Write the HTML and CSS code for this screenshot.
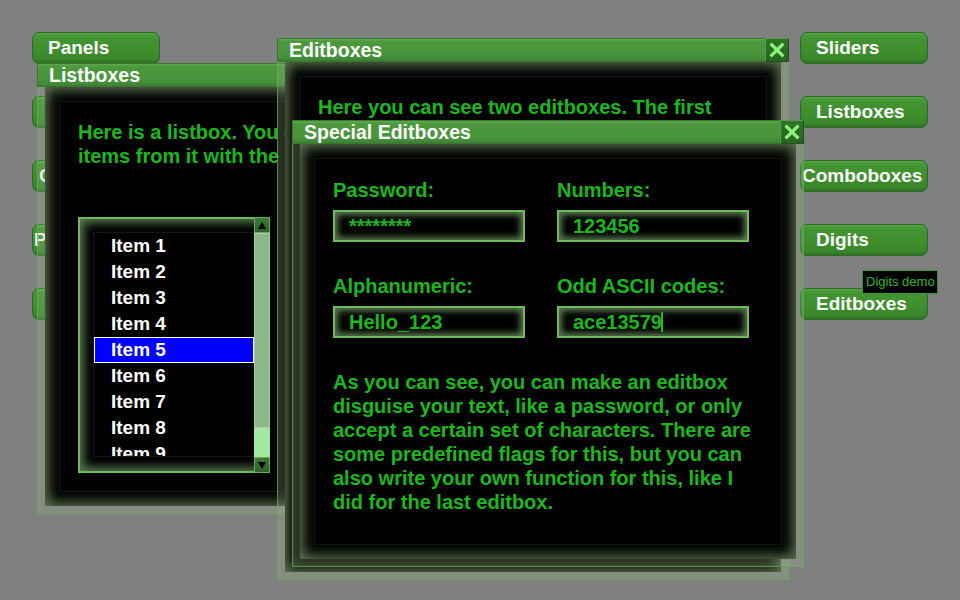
FILE: index.html
```html
<!DOCTYPE html>
<html lang="en">
<head>
<meta charset="utf-8">
<title>Widget demo</title>
<link rel="stylesheet" href="styles.css">
</head>
<body>
<div class="desktop">
  <nav class="btn-col">
    <div class="btn">Panels</div>
    <div class="btn">Buttons</div>
    <div class="btn btn-mid">Checkboxes</div>
    <div class="btn btn-wide">Progressbars</div>
    <div class="btn">Labels</div>
  </nav>
  <nav class="btn-col">
    <div class="btn">Sliders</div>
    <div class="btn">Listboxes</div>
    <div class="btn btn-wide">Comboboxes</div>
    <div class="btn">Digits</div>
    <div class="btn">Editboxes</div>
  </nav>

  <section class="window win-list">
    <header class="titlebar"><span class="title">Listboxes</span></header>
    <div class="frame">
      <div class="panel">
        <p class="text">Here is a listbox. You can select<br>items from it with the mouse.</p>
        <div class="listbox">
          <ul class="list">
            <li class="item">Item 1</li>
            <li class="item">Item 2</li>
            <li class="item">Item 3</li>
            <li class="item">Item 4</li>
            <li class="item selected">Item 5</li>
            <li class="item">Item 6</li>
            <li class="item">Item 7</li>
            <li class="item">Item 8</li>
            <li class="item">Item 9</li>
            <li class="item">Item 10</li>
          </ul>
          <div class="scrollbar">
            <div class="sb-arrow"><span class="tri-up"></span></div>
            <div class="sb-track"><div class="sb-thumb"></div></div>
            <div class="sb-arrow"><span class="tri-down"></span></div>
          </div>
        </div>
      </div>
    </div>
  </section>

  <section class="window win-edit">
    <header class="titlebar">
      <span class="title">Editboxes</span>
      <span class="close"><svg viewBox="0 0 24 24" width="24" height="24"><path d="M5 5 L19 19 M19 5 L5 19" stroke="#8ff27e" stroke-width="3.6" fill="none"/></svg></span>
    </header>
    <div class="frame">
      <div class="panel">
        <p class="text">Here you can see two editboxes. The first<br>one is a normal editbox, the second one<br>has a limited number of characters.</p>
      </div>
    </div>
  </section>

  <section class="window win-special">
    <header class="titlebar">
      <span class="title">Special Editboxes</span>
      <span class="close"><svg viewBox="0 0 24 24" width="24" height="24"><path d="M5 5 L19 19 M19 5 L5 19" stroke="#8ff27e" stroke-width="3.6" fill="none"/></svg></span>
    </header>
    <div class="frame">
      <div class="panel panel-fields">
        <div class="fields">
          <div class="field">
            <div class="label">Password:</div>
            <div class="editbox">********</div>
          </div>
          <div class="field">
            <div class="label">Numbers:</div>
            <div class="editbox">123456</div>
          </div>
          <div class="field">
            <div class="label">Alphanumeric:</div>
            <div class="editbox">Hello_123</div>
          </div>
          <div class="field">
            <div class="label">Odd ASCII codes:</div>
            <div class="editbox">ace13579<span class="caret"></span></div>
          </div>
        </div>
        <p class="text">As you can see, you can make an editbox<br>disguise your text, like a password, or only<br>accept a certain set of characters. There are<br>some predefined flags for this, but you can<br>also write your own function for this, like I<br>did for the last editbox.</p>
      </div>
    </div>
  </section>

  <div class="tooltip">Digits demo</div>
</div>
</body>
</html>
```
FILE: styles.css
```css
html, body {
  margin: 0;
  padding: 0;
  background: #808080;
}

.desktop {
  position: relative;
  width: 960px;
  height: 600px;
  box-sizing: border-box;
  padding: 32px;
  display: flex;
  justify-content: space-between;
  align-items: flex-start;
  overflow: hidden;
  background: #808080;
  font-family: "Liberation Sans", Arial, sans-serif;
}

/* side navigation buttons */
.btn-col {
  display: flex;
  flex-direction: column;
  gap: 32px;
  width: 128px;
}

.btn {
  height: 32px;
  box-sizing: border-box;
  border: 1px solid #2e6a24;
  border-radius: 7px;
  padding-left: 15px;
  line-height: 29px;
  font-weight: bold;
  font-size: 19px;
  color: #fff;
  white-space: nowrap;
  overflow: hidden;
  background: linear-gradient(#5aa84a 0, #449534 10%, #3e8d2e 60%, #3a862b 88%, #2f7024 100%);
}

.btn-mid { padding-left: 6px; }
.btn-wide { padding-left: 1px; }

/* child windows */
.window {
  position: absolute;
  display: flex;
  flex-direction: column;
}

.win-list { left: 37px; top: 63px; width: 512px; height: 447px; }
.win-edit { left: 277px; top: 38px; width: 512px; height: 542px; }
.win-special { left: 292px; top: 120px; width: 512px; height: 447px; }

.titlebar {
  height: 24px;
  flex: none;
  box-sizing: border-box;
  display: flex;
  align-items: stretch;
  border: 1px solid #3a772e;
  background: linear-gradient(#5eaa4d 0, #4c983c 12%, #48943a 70%, #42893a 92%, #3a7a30 100%);
}

.title {
  flex: 1;
  padding-left: 11px;
  line-height: 23px;
  font-weight: bold;
  font-size: 19.5px;
  color: #fff;
  white-space: nowrap;
}

.close {
  width: 24px;
  height: 24px;
  margin: -1px -1px -1px 0;
  box-sizing: border-box;
  border: 1px solid #1f4f18;
  border-top-color: #5a9a4c;
  border-left-color: #5a9a4c;
  background: linear-gradient(#2f7426, #276420);
  display: flex;
  align-items: center;
  justify-content: center;
}

.close svg {
  display: block;
  width: 22px;
  height: 22px;
}

.frame {
  flex: 1;
  display: flex;
  border: 1px solid rgba(104, 172, 84, 0.7);
  border-top: none;
  padding: 0 7px 7px;
  background: rgba(150, 182, 136, 0.26);
}

.panel {
  position: relative;
  flex: 1;
  box-sizing: border-box;
  padding: 33px;
  background: #000;
  box-shadow: inset 0 0 13px 3px rgba(118, 150, 104, 0.82);
}

.panel::before {
  content: "";
  position: absolute;
  inset: 14px;
  border: 1px solid #141614;
  pointer-events: none;
}

.panel-fields { padding-top: 34px; }

.text {
  position: relative;
  margin: 0;
  font-weight: bold;
  font-size: 20px;
  line-height: 24px;
  color: #1bb81b;
  white-space: nowrap;
}

/* listbox */
.listbox {
  position: relative;
  margin-top: 49px;
  width: 192px;
  height: 256px;
  box-sizing: border-box;
  border: 2px solid #6fb95f;
  display: flex;
  background: #000;
  box-shadow: inset 0 0 10px 4px rgba(118, 158, 104, 0.75);
}

.list {
  flex: 1;
  list-style: none;
  margin: 13px 0 14px 13px;
  padding: 0;
  border: 1px solid #141714;
  border-right: none;
  overflow: hidden;
}

.item {
  height: 26px;
  box-sizing: border-box;
  padding-left: 17px;
  line-height: 26px;
  font-weight: bold;
  font-size: 19px;
  color: #fff;
  white-space: nowrap;
}

.item.selected {
  background: #0000ff;
  border: 1px solid #fff;
  padding-left: 16px;
  line-height: 24px;
}

.scrollbar {
  width: 16px;
  margin: -2px -2px -2px 0;
  display: flex;
  flex-direction: column;
}

.sb-arrow {
  height: 16px;
  flex: none;
  box-sizing: border-box;
  border: 1px solid #6aa85e;
  background: linear-gradient(#3c7a34, #2c6226);
  display: flex;
  align-items: center;
  justify-content: center;
}

.tri-up, .tri-down {
  width: 0;
  height: 0;
  border-left: 4px solid transparent;
  border-right: 4px solid transparent;
}

.tri-up { border-bottom: 7px solid #000; }
.tri-down { border-top: 7px solid #000; }

.sb-track {
  flex: 1;
  background: #a2eaa0;
}

.sb-thumb {
  height: 195px;
  box-sizing: border-box;
  border: 1px solid #a9cca5;
  background: #8db689;
}

/* editbox form */
.fields {
  position: relative;
  display: grid;
  grid-template-columns: 192px 192px;
  column-gap: 32px;
}

.label {
  font-weight: bold;
  font-size: 20px;
  line-height: 24px;
  color: #1bb81b;
  margin-bottom: 8px;
  white-space: nowrap;
}

.editbox {
  height: 32px;
  box-sizing: border-box;
  margin-bottom: 32px;
  border: 2px solid #6dba5d;
  padding-left: 14px;
  line-height: 28px;
  font-weight: bold;
  font-size: 20px;
  color: #1bb81b;
  background: #000;
  box-shadow: inset 0 0 6px 3px rgba(120, 165, 106, 0.75);
  white-space: nowrap;
}

.caret {
  display: inline-block;
  width: 2px;
  height: 20px;
  margin-left: -1px;
  vertical-align: -3px;
  background: #1bb81b;
}

/* hover hint */
.tooltip {
  position: absolute;
  left: 862px;
  top: 270px;
  width: 76px;
  height: 24px;
  box-sizing: border-box;
  border: 1px solid #2d9a2d;
  background: #000;
  color: #2fb52f;
  font-size: 13px;
  line-height: 22px;
  padding-left: 3px;
  white-space: nowrap;
}
```
